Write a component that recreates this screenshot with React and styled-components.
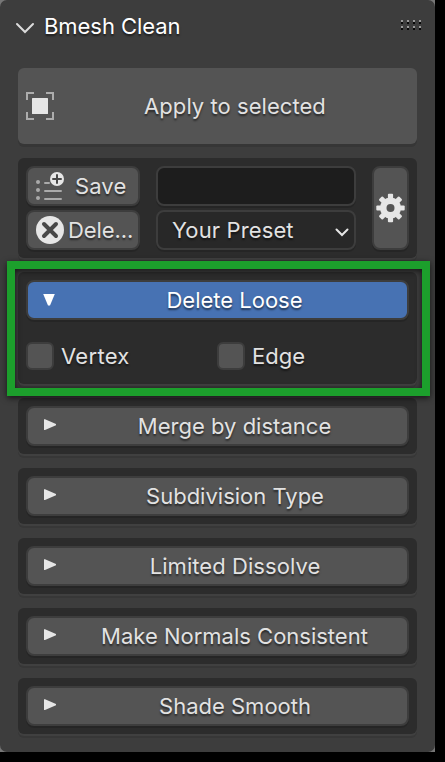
import React from "react";
import styled, { createGlobalStyle, css } from "styled-components";

const GlobalStyle = createGlobalStyle`
  body { margin: 0; background: #000; }
  * { box-sizing: border-box; }
`;

const Viewport = styled.main`
  width: 445px;
  height: 762px;
  background: #000;
  overflow: hidden;
  font-family: Inter, sans-serif;
  font-size: 22px;
  line-height: 28px;
  color: #e2e2e2;
  text-shadow: 0 2px 2px rgba(0, 0, 0, 0.55);
`;

const Backdrop = styled.div`
  width: 435px;
  height: 752px;
  background: #777;
`;

const Panel = styled.section`
  height: 100%;
  padding: 0 18px;
  border-radius: 7px;
  background: #3d3d3d;
  display: flex;
  flex-direction: column;
`;

const Header = styled.header`
  height: 68px;
  display: flex;
  align-items: flex-start;
  padding-top: 12px;
  margin: 0 -6px 0 -2px;
`;

const HeaderChevron = styled.svg`
  margin: 9px 9px 0 -1px;
`;

const Title = styled.h1`
  margin: 0;
  flex: 1;
  font: inherit;
  letter-spacing: -0.05px;
  color: #fff;
`;

const Grip = styled.svg`
  margin: 8px 2px 0 0;
`;

const Label = styled.span`
  white-space: nowrap;
  letter-spacing: ${(p) => p.$spacing || 0}px;
`;

const ApplyButton = styled.button`
  height: 76px;
  flex: none;
  margin: 0 0 14px;
  padding: 0 0 0 8px;
  border: 0;
  border-radius: 6px;
  background: #545454;
  box-shadow: 0 3px 0 #363636;
  display: grid;
  grid-template-columns: 28px 1fr;
  align-items: center;
  color: inherit;
  font: inherit;
  text-shadow: inherit;
  text-align: center;
`;

const ApplyText = styled(Label)`
  padding-right: 1px;
`;

const Box = styled.section`
  position: relative;
  flex: none;
  height: ${(p) => p.$height}px;
  margin-bottom: 14px;
  padding: 8px;
  border-radius: 6px;
  background: #2c2c2c;
  box-shadow: 0 2px 0 #404040, 0 4px 0 #373737;
`;

const PresetGrid = styled(Box)`
  display: grid;
  grid-template-columns: 114px 200px 37px;
  grid-template-rows: 40px 40px;
  column-gap: 16px;
  row-gap: 4px;
`;

const frame = css`
  border: 2px solid #3d3d3d;
  border-radius: 8px;
  color: inherit;
  font: inherit;
  text-shadow: inherit;
  box-shadow: 0 2px 0 rgba(0, 0, 0, 0.14);
`;

const ToolButton = styled.button`
  ${frame}
  padding: 0 0 0 8px;
  background: #545454;
  display: flex;
  align-items: center;
  gap: ${(p) => p.$gap}px;
`;

const NameField = styled.input`
  ${frame}
  min-width: 0;
  background: #1d1d1d;
`;

const PresetSelect = styled.button`
  ${frame}
  padding: 0 5px 0 14px;
  background: #282828;
  display: flex;
  align-items: center;
  justify-content: space-between;
`;

const SelectArrow = styled.svg`
  margin-top: 3px;
`;

const SettingsButton = styled.button`
  ${frame}
  grid-column: 3;
  grid-row: 1 / 3;
  padding: 0 0 1px;
  background: #545454;
  display: grid;
  place-items: center;
`;

const SectionButton = styled.button`
  ${frame}
  width: 383px;
  height: 40px;
  padding: 0;
  background: ${(p) => (p.$open ? "#4772b3" : "#545454")};
  color: ${(p) => (p.$open ? "#fff" : "#e2e2e2")};
  display: grid;
  grid-template-columns: 34px 1fr;
  align-items: center;
`;

const Arrow = styled.svg`
  margin: 0 0 2px 14px;
`;

const SectionTitle = styled(Label)`
  padding-left: ${(p) => p.$inset || 0}px;
`;

const Options = styled.div`
  display: grid;
  grid-template-columns: 191px 1fr;
  margin-top: 22px;
`;

const Option = styled.label`
  display: flex;
  align-items: center;
  gap: 7px;
`;

const Check = styled.input`
  appearance: none;
  width: 28px;
  height: 28px;
  margin: 0;
  border: 2px solid #3d3d3d;
  border-radius: 6px;
  background: #545454;
`;

const Highlight = styled.div`
  position: absolute;
  z-index: 1;
  inset: -11px -13px -12px -11px;
  border: 8px solid #1c9f2c;
  filter: drop-shadow(0 2px 3px rgba(0, 0, 0, 0.65));
  pointer-events: none;
`;

const SelectionIcon = () => (
  <svg width="28" height="28" viewBox="0 0 28 28">
    <path d="M8 1H1v7M20 1h7v7M1 20v7h7M27 20v7h-7" fill="none" stroke="#adadad" strokeWidth="2" />
    <rect x="6" y="6" width="16" height="16" rx="0.5" fill="#e6e6e6" />
  </svg>
);

const AddListIcon = () => (
  <svg width="28" height="28" viewBox="0 0 28 28">
    <g fill="#aaa">
      <circle cx="2" cy="10" r="2" />
      <circle cx="2" cy="18" r="2" />
      <circle cx="2" cy="26" r="2" />
    </g>
    <path d="M9 11h4M9 19h16M9 27h16" stroke="#aaa" strokeWidth="2" strokeLinecap="round" />
    <circle cx="21" cy="7" r="7" fill="#e6e6e6" />
    <path d="M21 3v8M17 7h8" stroke="#484848" strokeWidth="2" strokeLinecap="round" />
  </svg>
);

const CancelIcon = () => (
  <svg width="28" height="28" viewBox="0 0 28 28">
    <circle cx="14" cy="14" r="14" fill="#e6e6e6" />
    <path d="M8 8l12 12M20 8L8 20" stroke="#484848" strokeWidth="4" strokeLinecap="round" />
  </svg>
);

const GearIcon = () => (
  <svg width="29" height="30" viewBox="-14.5 -15 29 30">
    <g fill="#e6e6e6">
      {[0, 45, 90, 135].map((a) => (
        <rect key={a} x="-2.6" y="-14.2" width="5.2" height="28.4" rx="1" transform={`rotate(${a})`} />
      ))}
      <circle r="10.5" />
    </g>
    <circle r="4" fill="#545454" />
  </svg>
);

const Triangle = ({ open }) => (
  <Arrow width="14" height="14" viewBox="0 0 14 14">
    <path
      d={open ? "M1.2 2h11.6L8 13.5H6z" : "M2 1.2v10.8h1L14 7.2V6L3 1.2z"}
      fill={open ? "#fff" : "#e6e6e6"}
    />
  </Arrow>
);

const SECTIONS = [
  { name: "Merge by distance", spacing: 0.02 },
  { name: "Subdivision Type", inset: 1 },
  { name: "Limited Dissolve", spacing: 0.06, inset: 1 },
  { name: "Make Normals Consistent" },
  { name: "Shade Smooth", inset: 1 },
];

export default function App() {
  return (
    <Viewport>
      <GlobalStyle />
      <Backdrop>
        <Panel>
          <Header>
            <HeaderChevron width="20" height="14" viewBox="0 0 20 14">
              <path d="M2 3l8 8 8-8" fill="none" stroke="#dcdcdc" strokeWidth="2" strokeLinecap="round" />
            </HeaderChevron>
            <Title>Bmesh Clean</Title>
            <Grip width="20" height="10" viewBox="0 0 20 10" shapeRendering="crispEdges">
              {[0, 6, 12, 18].map((x) => (
                <g key={x}>
                  <path d={`M${x} 0h2v2h-2zM${x} 6h2v2h-2z`} fill="#999" />
                  <path d={`M${x} 2h2v2h-2zM${x} 8h2v2h-2z`} fill="#080808" />
                </g>
              ))}
            </Grip>
          </Header>
          <ApplyButton>
            <SelectionIcon />
            <ApplyText $spacing={0.05}>Apply to selected</ApplyText>
          </ApplyButton>
          <PresetGrid $height={100}>
            <ToolButton $gap={11}>
              <AddListIcon />
              <Label $spacing={0.1}>Save</Label>
            </ToolButton>
            <NameField aria-label="Preset name" />
            <SettingsButton aria-label="Settings">
              <GearIcon />
            </SettingsButton>
            <ToolButton $gap={4}>
              <CancelIcon />
              <Label $spacing={-0.1}>Dele...</Label>
            </ToolButton>
            <PresetSelect>
              <Label $spacing={0.12}>Your Preset</Label>
              <SelectArrow width="14" height="10" viewBox="0 0 14 10">
                <path d="M1.5 2.5L7 8l5.5-5.5" fill="none" stroke="#e6e6e6" strokeWidth="2" strokeLinecap="round" />
              </SelectArrow>
            </PresetSelect>
          </PresetGrid>
          <Box $height={112}>
            <SectionButton $open>
              <Triangle open />
              <SectionTitle>Delete Loose</SectionTitle>
            </SectionButton>
            <Options>
              <Option><Check type="checkbox" /><Label $spacing={0.3}>Vertex</Label></Option>
              <Option><Check type="checkbox" /><Label>Edge</Label></Option>
            </Options>
            <Highlight />
          </Box>
          {SECTIONS.map(({ name, spacing, inset }) => (
            <Box key={name} $height={56}>
              <SectionButton>
                <Triangle />
                <SectionTitle $spacing={spacing} $inset={inset}>{name}</SectionTitle>
              </SectionButton>
            </Box>
          ))}
        </Panel>
      </Backdrop>
    </Viewport>
  );
}
